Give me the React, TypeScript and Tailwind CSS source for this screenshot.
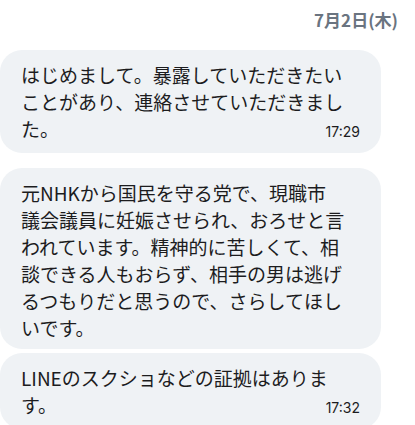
import React from "react";

const jp = { fontFamily: '"Noto Sans CJK JP", sans-serif' };

function Bubble({ lines, time }: { lines: string[]; time?: string }) {
  const last = lines[lines.length - 1];
  const rest = lines.slice(0, -1);
  return (
    <div className="w-[381px] rounded-[22px] bg-[#eff2f5] pl-[21px] pr-[21px] pt-[11px] pb-[8px] text-[19px] leading-[27px] text-[#1c1c1e]">
      {rest.map((l, i) => (
        <div key={i} className="whitespace-nowrap">
          {l}
        </div>
      ))}
      <div className="flex items-baseline justify-between whitespace-nowrap">
        <span>{last}</span>
        {time && (
          <span
            className="text-[14px] text-[#1c1c1e]"
            style={{ fontFamily: 'Inter, "Noto Sans CJK JP", sans-serif' }}
          >
            {time}
          </span>
        )}
      </div>
    </div>
  );
}

export default function App() {
  return (
    <div className="w-[415px] h-[425px] bg-white overflow-hidden" style={jp}>
      <div className="h-[50px] flex justify-end pr-[17px] pt-[8px]">
        <span className="text-[17px] leading-[24px] font-bold text-[#6a7480]">7月2日(木)</span>
      </div>
      <div className="flex flex-col">
        <Bubble
          lines={["はじめまして。暴露していただきたい", "ことがあり、連絡させていただきまし", "た。"]}
          time="17:29"
        />
        <div className="h-[15px]" />
        <Bubble
          lines={[
            "元NHKから国民を守る党で、現職市",
            "議会議員に妊娠させられ、おろせと言",
            "われています。精神的に苦しくて、相",
            "談できる人もおらず、相手の男は逃げ",
            "るつもりだと思うので、さらしてほし",
            "いです。",
          ]}
        />
        <div className="h-[4px]" />
        <Bubble lines={["LINEのスクショなどの証拠はありま", "す。"]} time="17:32" />
      </div>
    </div>
  );
}
